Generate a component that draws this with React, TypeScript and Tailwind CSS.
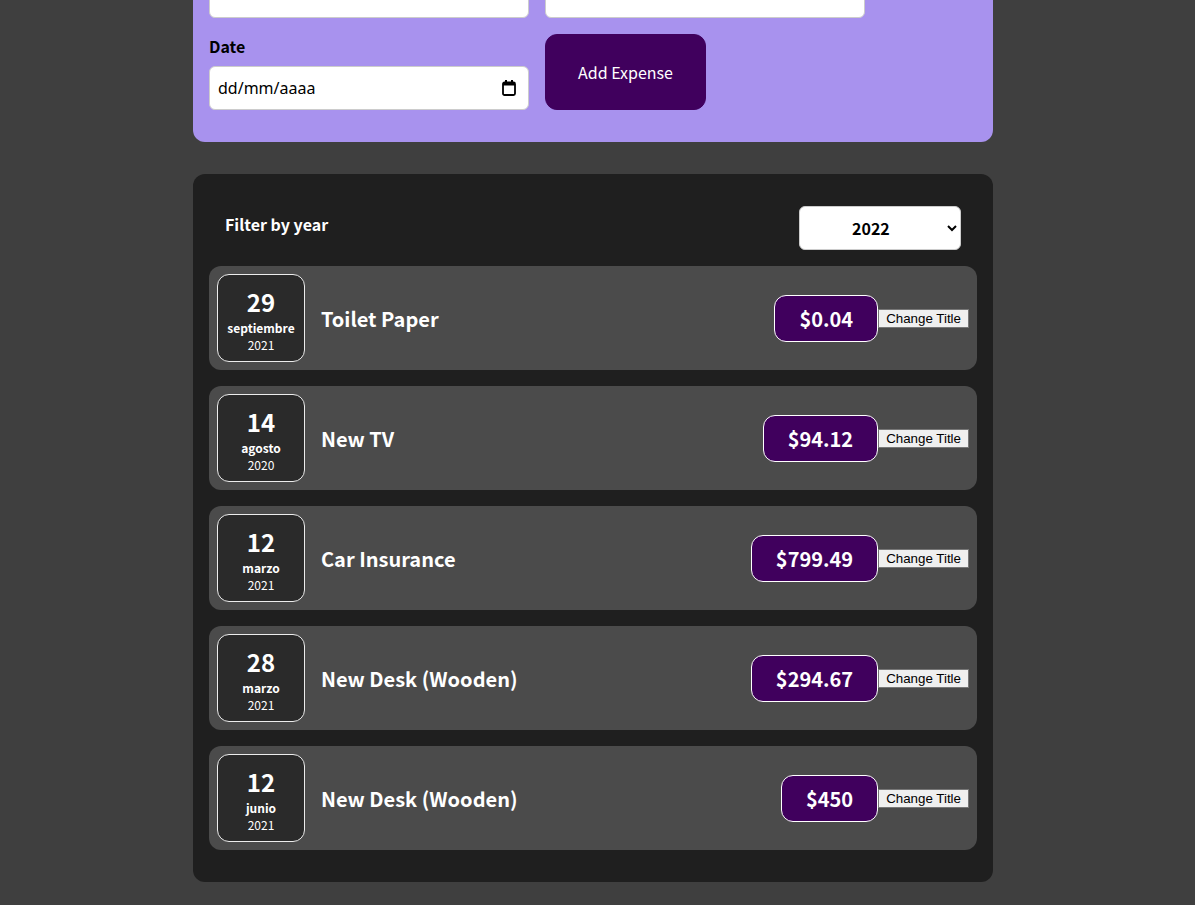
import React from 'react';

interface Expense {
  id: string;
  title: string;
  amount: string;
  day: string;
  month: string;
  year: string;
}

const expenses: Expense[] = [
  { id: 'e1', title: 'Toilet Paper', amount: '$0.04', day: '29', month: 'septiembre', year: '2021' },
  { id: 'e2', title: 'New TV', amount: '$94.12', day: '14', month: 'agosto', year: '2020' },
  { id: 'e3', title: 'Car Insurance', amount: '$799.49', day: '12', month: 'marzo', year: '2021' },
  { id: 'e4', title: 'New Desk (Wooden)', amount: '$294.67', day: '28', month: 'marzo', year: '2021' },
  { id: 'e5', title: 'New Desk (Wooden)', amount: '$450', day: '12', month: 'junio', year: '2021' },
];

// Chrome-style calendar glyph for the date field
function CalendarIcon() {
  return (
    <svg width="14" height="16" viewBox="0 0 14 16" className="text-black">
      <rect x="3" y="0" width="2" height="3" fill="currentColor" />
      <rect x="9" y="0" width="2" height="3" fill="currentColor" />
      <rect x="1" y="2.5" width="12" height="12.5" rx="1.5" fill="none" stroke="currentColor" strokeWidth="1.8" />
      <rect x="1" y="2.5" width="12" height="3" fill="currentColor" />
    </svg>
  );
}

function ExpenseDate({ day, month, year }: { day: string; month: string; year: string }) {
  return (
    <div className="flex flex-col items-center justify-center w-[88px] h-[88px] shrink-0 border border-[#ececec] bg-[#2a2a2a] text-white rounded-[12px]">
      <div className="text-[24px] font-bold leading-[normal]">{day}</div>
      <div className="text-[12px] font-bold leading-[normal]">{month}</div>
      <div className="text-[12px] leading-[normal]">{year}</div>
    </div>
  );
}

function ExpenseItem({ item }: { item: Expense }) {
  return (
    <div className="flex items-center justify-between p-2 mb-4 rounded-[12px] bg-[#4b4b4b]">
      <ExpenseDate day={item.day} month={item.month} year={item.year} />
      <div className="flex flex-1 items-center justify-start">
        <h2 className="flex-1 mx-4 text-[20px] font-bold text-white">{item.title}</h2>
        <div className="text-[20px] font-bold text-white bg-[#40005d] border border-white py-2 px-6 rounded-[12px]">
          {item.amount}
        </div>
      </div>
      <button
        type="button"
        className="bg-[#efefef] border border-[#767676] px-[7px] py-[1px] text-[13.33px] leading-[normal] text-black font-['Liberation_Sans',Arial,sans-serif]"
      >
        Change Title
      </button>
    </div>
  );
}

export default function App() {
  return (
    <div className="min-h-screen bg-[#3f3f3f] leading-[normal] font-['Noto_Sans_CJK_JP','Noto_Sans',sans-serif] overflow-hidden">
      <div className="flex flex-col items-center pr-[9px]">
        {/* New expense form (page scrolled, top cut off) */}
        <div className="w-[800px] -mt-[71px] p-4 rounded-[12px] bg-[#a892ee]">
          <div className="flex flex-wrap gap-4 mb-4">
            <div>
              <label className="block font-bold mb-2">Title</label>
              <input className="w-[320px] h-[41px] p-2 rounded-[6px] border border-[#ccc] bg-white" />
            </div>
            <div>
              <label className="block font-bold mb-2">Amount</label>
              <input className="w-[320px] h-[41px] p-2 rounded-[6px] border border-[#ccc] bg-white" />
            </div>
            <div>
              <label className="block font-bold mb-2">Date</label>
              <div className="relative w-[320px]">
                <input
                  placeholder="dd/mm/aaaa"
                  className="w-full h-[44px] p-2 rounded-[6px] border border-[#ccc] bg-white placeholder:text-black font-['Noto_Sans',sans-serif]"
                />
                <span className="absolute right-[13px] top-[14px]">
                  <CalendarIcon />
                </span>
              </div>
            </div>
            <button type="button" className="px-8 py-4 rounded-[12px] border border-[#40005d] bg-[#40005d] text-white">
              Add Expense
            </button>
          </div>
        </div>

        {/* Expenses list */}
        <div className="w-[800px] mt-8 mb-8 p-4 rounded-[12px] bg-[#1f1f1f]">
          <div className="px-4 text-white">
            <div className="flex items-center justify-between my-4">
              <label className="font-bold mb-2">Filter by year</label>
              <select
                defaultValue="2022"
                className="w-[162px] h-[44px] px-12 font-bold text-black bg-white rounded-[6px] border border-[#ccc]"
              >
                <option value="2022">2022</option>
                <option value="2021">2021</option>
                <option value="2020">2020</option>
                <option value="2019">2019</option>
              </select>
            </div>
          </div>
          {expenses.map((item) => (
            <ExpenseItem key={item.id} item={item} />
          ))}
        </div>
      </div>
    </div>
  );
}
